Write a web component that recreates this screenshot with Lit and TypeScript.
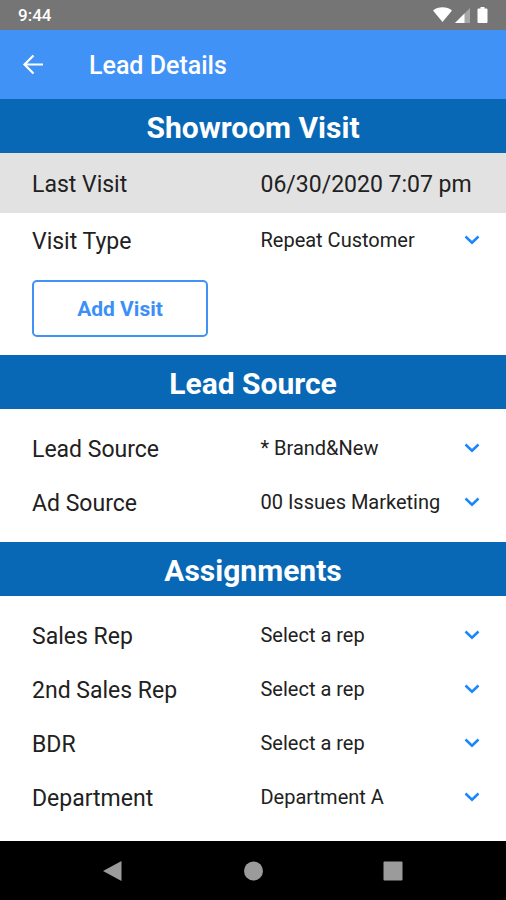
import { LitElement, html, css, svg } from "lit";
import { customElement, property } from "lit/decorators.js";

interface Field {
  id: string;
  label: string;
  options: string[];
}

const visitFields: Field[] = [
  { id: "visit-type", label: "Visit Type", options: ["Repeat Customer"] },
];

const sourceFields: Field[] = [
  { id: "lead-source", label: "Lead Source", options: ["* Brand&New"] },
  { id: "ad-source", label: "Ad Source", options: ["00 Issues Marketing"] },
];

const assignmentFields: Field[] = [
  { id: "sales-rep", label: "Sales Rep", options: ["Select a rep"] },
  { id: "second-sales-rep", label: "2nd Sales Rep", options: ["Select a rep"] },
  { id: "bdr", label: "BDR", options: ["Select a rep"] },
  { id: "department", label: "Department", options: ["Department A"] },
];

@customElement("select-row")
class SelectRow extends LitElement {
  @property({ attribute: false }) field!: Field;

  static styles = css`
    :host {
      display: block;
    }
    .row {
      display: grid;
      grid-template-columns: 51fr 49fr;
      align-items: center;
      height: 54px;
      padding: 0 26px 0 32px;
    }
    .label {
      padding-top: 2px;
      font-size: 23px;
      line-height: 28px;
    }
    .control {
      display: grid;
      grid-template-columns: 1fr 16px;
      align-items: center;
      min-width: 0;
      padding-bottom: 2px;
    }
    .select {
      grid-area: 1 / 1 / 2 / 3;
      appearance: none;
      width: 100%;
      height: 40px;
      margin: 0;
      padding: 0 20px 0 0;
      border: 0;
      background: transparent;
      color: inherit;
      font: inherit;
      font-size: 20px;
    }
    .chevron {
      grid-area: 1 / 2;
      width: 16px;
      height: 10px;
      pointer-events: none;
    }
  `;

  render() {
    const { id, label, options } = this.field;
    return html`
      <div class="row">
        <label class="label" for=${id}>${label}</label>
        <div class="control">
          <select class="select" id=${id}>
            ${options.map((o) => html`<option>${o}</option>`)}
          </select>
          <svg class="chevron" viewBox="0 0 16 10" aria-hidden="true">
            <path d="M1.500 1.500 8 7.700l6.500-6.200" fill="none" stroke="#1a86fb" stroke-width="2.500" />
          </svg>
        </div>
      </div>
    `;
  }
}

@customElement("app-root")
class AppRoot extends LitElement {
  static styles = css`
    :host {
      display: flex;
      flex-direction: column;
      min-height: 100vh;
      background: #fff;
      color: #212121;
      font-family: Roboto, sans-serif;
    }
    .status {
      display: flex;
      align-items: center;
      justify-content: space-between;
      height: 30px;
      padding: 0 15px 0 18px;
      background: #757575;
      color: #fff;
      font-size: 17px;
      font-weight: 500;
    }
    .status-icons {
      width: 58px;
      height: 20px;
    }
    .app-bar {
      display: flex;
      align-items: center;
      gap: 45px;
      height: 69px;
      padding: 0 22px;
      background: #4092f7;
      color: #fff;
    }
    .back {
      display: flex;
      padding: 0;
      border: 0;
      background: none;
      color: inherit;
    }
    .back-icon {
      width: 22px;
      height: 22px;
    }
    .title {
      margin: 0;
      padding-top: 2px;
      font-size: 25px;
      font-weight: 500;
    }
    .heading {
      display: flex;
      align-items: center;
      justify-content: center;
      box-sizing: border-box;
      height: 54px;
      margin: 0;
      padding-top: 2px;
      background: #0968b5;
      color: #fff;
      font-size: 30px;
      font-weight: 700;
    }
    .content {
      flex: 1;
    }
    .fact {
      display: grid;
      grid-template-columns: 51fr 49fr;
      align-items: center;
      box-sizing: border-box;
      height: 60px;
      margin: 0;
      padding: 4px 26px 0 32px;
      background: #e2e2e2;
      font-size: 23px;
      line-height: 28px;
    }
    .value {
      margin: 0;
      white-space: nowrap;
    }
    .visit {
      padding: 1px 0 18px;
    }
    .add {
      display: block;
      width: 176px;
      height: 57px;
      margin: 12px 32px 0;
      padding: 0;
      border: 2px solid #4092f7;
      border-radius: 5px;
      background: #fff;
      color: #3b8ff7;
      font-family: inherit;
      font-size: 21px;
      font-weight: 700;
    }
    .fields {
      padding: 13px 0 12px;
    }
    .nav {
      display: flex;
      justify-content: space-around;
      align-items: center;
      height: 59px;
      padding: 0 43px;
      background: #000;
    }
    .nav-button {
      display: flex;
      padding: 0;
      border: 0;
      background: none;
    }
    .nav-icon {
      width: 22px;
      height: 22px;
      fill: #9b9b9b;
    }
  `;

  private rows(fields: Field[]) {
    return fields.map((f) => html`<select-row .field=${f}></select-row>`);
  }

  private navButton(name: string, shape: unknown) {
    return html`
      <button class="nav-button" aria-label=${name}>
        <svg class="nav-icon" viewBox="0 0 22 22">${shape}</svg>
      </button>
    `;
  }

  render() {
    return html`
      <div class="status">
        <span>9:44</span>
        <svg class="status-icons" viewBox="0 0 58 20" aria-hidden="true">
          <path d="M0 5.500C5 1.200 14 1.200 19 5.500L9.500 17z" fill="#fff" />
          <path d="M37 3v15H22z" fill="#a6a6a6" />
          <path d="M31.500 8.500V18H22z" fill="#fff" />
          <path d="M47.500 2h4v1.500H53.500a1 1 0 0 1 1 1v12.500a1 1 0 0 1-1 1h-8a1 1 0 0 1-1-1V4.500a1 1 0 0 1 1-1h2z" fill="#fff" />
        </svg>
      </div>
      <header class="app-bar">
        <button class="back" aria-label="Back">
          <svg class="back-icon" viewBox="0 0 22 22">
            <path d="M21 10.500H2.500M11.500 1.500l-9 9 9 9" fill="none" stroke="currentColor" stroke-width="2.200" />
          </svg>
        </button>
        <h1 class="title">Lead Details</h1>
      </header>
      <main class="content">
        <section>
          <h2 class="heading">Showroom Visit</h2>
          <dl class="fact">
            <dt>Last Visit</dt>
            <dd class="value">06/30/2020 7:07 pm</dd>
          </dl>
          <div class="visit">
            ${this.rows(visitFields)}
            <button class="add">Add Visit</button>
          </div>
        </section>
        <section>
          <h2 class="heading">Lead Source</h2>
          <div class="fields">${this.rows(sourceFields)}</div>
        </section>
        <section>
          <h2 class="heading">Assignments</h2>
          <div class="fields">${this.rows(assignmentFields)}</div>
        </section>
      </main>
      <nav class="nav">
        ${this.navButton("Back", svg`<path d="M19.500 1v20L1 11z" />`)}
        ${this.navButton("Home", svg`<circle cx="11.500" cy="11" r="9.500" />`)}
        ${this.navButton("Recent apps", svg`<rect x="1.500" y="1.500" width="19" height="19" rx="1" />`)}
      </nav>
    `;
  }
}
